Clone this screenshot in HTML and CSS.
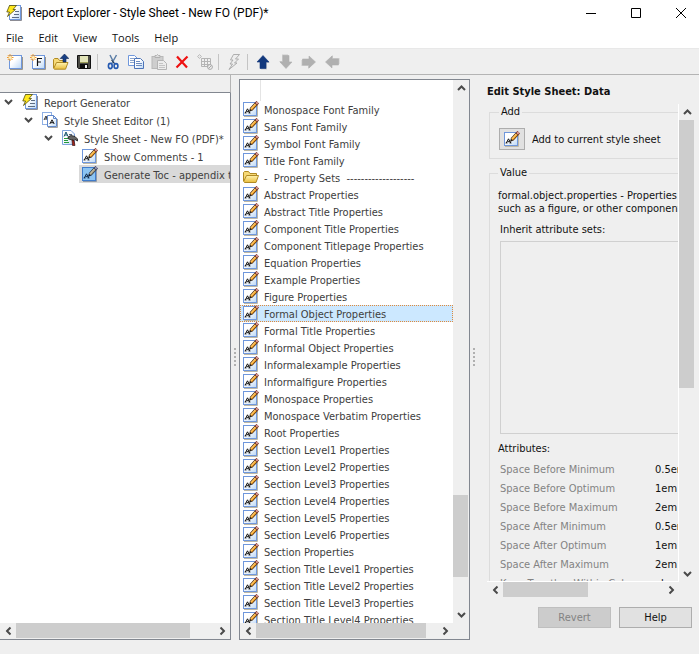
FILE: index.html
```html
<!DOCTYPE html>
<html lang="en">
<head>
    <meta charset="UTF-8">
    <meta name="viewport" content="width=device-width, initial-scale=1.0">
    <title>Report Explorer - Style Sheet - New FO (PDF)*</title>
    <link rel="stylesheet" href="styles.css">
</head>
<body>
    <!-- Shared icons -->
    <svg class="sprite" aria-hidden="true">
        <defs>
            <linearGradient id="page-fill" x1="0" y1="0" x2="1" y2="1">
                <stop offset="0.4" stop-color="#ffffff"/>
                <stop offset="1" stop-color="#bcd8f6"/>
            </linearGradient>
            <linearGradient id="folder-fill" x1="0" y1="0" x2="0" y2="1">
                <stop offset="0" stop-color="#fff3b0"/>
                <stop offset="1" stop-color="#e9bd3c"/>
            </linearGradient>
        </defs>
        <symbol id="icon-style" viewBox="0 0 16 16">
            <path d="M1 15.5H14.5V4" fill="none" stroke="#bdb8a6"/>
            <rect x="0.5" y="1.5" width="13" height="13" fill="url(#page-fill)" stroke="#6f97dc"/>
            <path d="M2.3 12L4.5 7.8L6.7 12M3.5 10.7H5.8" fill="none" stroke="#111"/>
            <path d="M1.5 12H3.5M5.5 12H7.5" stroke="#111" stroke-width="0.8"/>
            <path d="M8 8.5L13.5 2.5" stroke="#4d2c10" stroke-width="3.6"/>
            <path d="M8 8.5L12.8 3.2" stroke="#f8a52a" stroke-width="2.2"/>
            <path d="M8 7.8L12.2 3" stroke="#ffe49a" stroke-width="0.8"/>
            <path d="M13 3L14.8 1.2" stroke="#7a2e2a" stroke-width="3.6"/>
            <path d="M13.2 2.8L14.6 1.4" stroke="#e3a89e" stroke-width="2"/>
            <path d="M6 10.8L6.9 7.6L9.2 9.7Z" fill="#2b2015"/>
        </symbol>
        <symbol id="icon-style-selected" viewBox="0 0 16 16">
            <path d="M1 15.5H14.5V4" fill="none" stroke="#8f9aa8"/>
            <rect x="0.5" y="1.5" width="13" height="13" fill="#8cc4f2" stroke="#3f7ccc"/>
            <path d="M2.3 12L4.5 7.8L6.7 12M3.5 10.7H5.8" fill="none" stroke="#0b2646"/>
            <path d="M1.5 12H3.5M5.5 12H7.5" stroke="#0b2646" stroke-width="0.8"/>
            <path d="M8 8.5L13.5 2.5" stroke="#2c3848" stroke-width="3.6"/>
            <path d="M8 8.5L12.8 3.2" stroke="#a59c80" stroke-width="2.2"/>
            <path d="M8 7.8L12.2 3" stroke="#d8d3b8" stroke-width="0.8"/>
            <path d="M13 3L14.8 1.2" stroke="#3a3f60" stroke-width="3.6"/>
            <path d="M13.2 2.8L14.6 1.4" stroke="#9a9cba" stroke-width="2"/>
            <path d="M6 10.8L6.9 7.6L9.2 9.7Z" fill="#10182a"/>
        </symbol>
        <symbol id="icon-folder" viewBox="0 0 16 16">
            <path d="M0.5 12V3.5L1.5 2.5H5.5L7 4.5H13.5V7" fill="#f6d976" stroke="#b08a24"/>
            <path d="M0.7 12.5L3.5 6.5H15.5L13 13.5H1.5Z" fill="url(#folder-fill)" stroke="#b08a24"/>
        </symbol>
        <symbol id="icon-report" viewBox="0 0 16 16">
            <path d="M4 15.5H15.5V2" fill="none" stroke="#8c8c94"/>
            <rect x="3.5" y="0.5" width="11" height="14" fill="url(#page-fill)" stroke="#6f97dc"/>
            <path d="M9 6.5H13M8 9.5H13M6 12.5H13" stroke="#5c6c84"/>
            <path d="M3.5 0.5H10.5L7 4.5H9.5L1.5 11.5L3.5 7H0.8Z" fill="#ffe81c" stroke="#57510d" stroke-width="0.8"/>
        </symbol>
        <symbol id="icon-editor" viewBox="0 0 16 16">
            <rect x="0.5" y="0.5" width="9" height="12" fill="#fff" stroke="#8fb0e4"/>
            <path d="M2 8L4 4L5.5 8M2.8 7H5" fill="none" stroke="#333"/>
            <path d="M6 15.5H15.5V7" fill="none" stroke="#a4a4a4"/>
            <path d="M5.5 3.5H11.5L14.5 6.5V14.5H5.5Z" fill="url(#page-fill)" stroke="#6088cc"/>
            <path d="M11.5 3.5V6.5H14.5" fill="none" stroke="#6088cc"/>
            <path d="M7.8 12L10 7.8L12.2 12M9 10.7H11.3" fill="none" stroke="#111"/>
        </symbol>
        <symbol id="icon-sheet" viewBox="0 0 16 16">
            <path d="M0.5 0.5H9L12.5 4V14.5H0.5Z" fill="url(#page-fill)" stroke="#7fa3dc"/>
            <path d="M2 6.5L4 2L6 6.5M3 5H5.5" fill="none" stroke="#12506a"/>
            <path d="M7 4.5H10M7 6.5H9" stroke="#56667e"/>
            <path d="M2 8.5H6M2 10.5H6M2 12.5H7" stroke="#259a3c"/>
            <path d="M6 7L9 5.5L13 6.5L15.5 9V11L13 9.5L12 10.5L6.5 9Z" fill="#666" stroke="#1c1c1c" stroke-width="0.8"/>
            <path d="M10 10L12 10.5L13 15.5H10.5Z" fill="#a3261b" stroke="#2a0a08" stroke-width="0.6"/>
        </symbol>
        <symbol id="icon-new" viewBox="0 0 16 16">
            <path d="M3 15.5H15.5V3" fill="none" stroke="#9a968c"/>
            <rect x="2.5" y="1.5" width="12" height="13" fill="url(#page-fill)" stroke="#6f97dc"/>
            <path d="M3 0V7M0 3.5H6.5M0.8 1L5.5 6M5.5 1L0.8 6" stroke="#f39a2c"/>
            <circle cx="3.2" cy="3.5" r="1.5" fill="#fff0b8"/>
        </symbol>
        <symbol id="icon-new-form" viewBox="0 0 16 16">
            <use href="#icon-new"/>
            <path d="M7.5 12V4.5H12M7.5 8H11" fill="none" stroke="#111" stroke-width="1.2"/>
        </symbol>
        <symbol id="icon-open" viewBox="0 0 16 16">
            <path d="M0.5 14V5.5L1.5 4.5H5L6.5 6.5H12.5V9" fill="#f6d976" stroke="#b08a24"/>
            <path d="M0.7 14.5L3.5 8.5H15L12.5 15.2H1.5Z" fill="url(#folder-fill)" stroke="#b08a24"/>
            <path d="M11.5 0L15.8 4.5H13V8H10V4.5H7.2Z" fill="#173f85" stroke="#0c2450" stroke-width="0.6"/>
        </symbol>
        <symbol id="icon-save" viewBox="0 0 16 16">
            <path d="M1.5 1.5H14.5V14.5H2.5L1.5 13.5Z" fill="#4a4a44" stroke="#111"/>
            <rect x="4" y="2" width="8" height="6" fill="#e2e4b8"/>
            <path d="M4 8.5H12" stroke="#9c9d58"/>
            <rect x="4" y="10" width="8" height="4" fill="#0d0d0d"/>
            <rect x="9" y="11" width="2" height="3" fill="#f2f2f2"/>
        </symbol>
        <symbol id="icon-cut" viewBox="0 0 16 16">
            <path d="M5 1L9.5 10M11.5 1L6.5 10" stroke="#5c7ea6" stroke-width="1.5" fill="none"/>
            <path d="M6.5 6L9.5 9.5" stroke="#1c2c44"/>
            <ellipse cx="5.3" cy="12" rx="1.9" ry="2.6" fill="none" stroke="#2358b0" stroke-width="1.6"/>
            <ellipse cx="11" cy="12" rx="1.9" ry="2.4" fill="none" stroke="#2358b0" stroke-width="1.6"/>
        </symbol>
        <symbol id="icon-copy" viewBox="0 0 16 16">
            <path d="M0.5 1.5H6.5L9.5 4.5V11.5H0.5Z" fill="#fff" stroke="#6f97dc"/>
            <path d="M2 4.5H6M2 6.5H6M2 8.5H6" stroke="#8aa4cc"/>
            <path d="M6.5 4.5H12.5L15.5 7.5V14.5H6.5Z" fill="url(#page-fill)" stroke="#4d74b8"/>
            <path d="M8 7.5H12M8 9.5H14M8 11.5H14" stroke="#6d8cc0"/>
        </symbol>
        <symbol id="icon-paste" viewBox="0 0 16 16">
            <rect x="1" y="2.5" width="11" height="12" fill="#cecece" stroke="#b8b8b8"/>
            <path d="M4 3.5V1.5H5.5L6.5 0.5L7.5 1.5H9V3.5Z" fill="#dedede" stroke="#b0b0b0"/>
            <path d="M6.5 6.5H12.5L15.5 9.5V15.5H6.5Z" fill="#ececec" stroke="#b4b4b4"/>
            <path d="M8 9.5H12M8 11.5H14M8 13.5H14" stroke="#c4c4c4"/>
        </symbol>
        <symbol id="icon-delete" viewBox="0 0 16 16">
            <path d="M3 2.5L13 13.5M13.5 2.5L2.5 13.5" stroke="#ee1111" stroke-width="2.2"/>
        </symbol>
        <symbol id="icon-grid" viewBox="0 0 16 16">
            <path d="M4.5 4.5H13.5V12.5H4.5ZM4.5 7.5H13.5M4.5 10.5H13.5M7.5 4.5V12.5M10.5 4.5V12.5" fill="none" stroke="#b4b4b4"/>
            <path d="M2.5 0.5L4.5 2.5L2.5 4.5L0.5 2.5Z" fill="#e6e6e6" stroke="#bcbcbc"/>
            <circle cx="13" cy="13" r="2.4" fill="#efefef" stroke="#a8a8a8"/>
            <path d="M11.5 14.5L14.5 11.5" stroke="#a8a8a8"/>
        </symbol>
        <symbol id="icon-run" viewBox="0 0 16 16">
            <path d="M7.5 0.5H13.5L9.5 5H12.5L8.5 9H11L3 15.5L6.5 10H4L7 6H4.5Z" fill="#ededed" stroke="#a6a6a6" stroke-width="0.9"/>
        </symbol>
        <symbol id="icon-arrow" viewBox="0 0 16 16">
            <path d="M9 3L15 9H12V15.5H6V9Z" fill="#b4b4b4" opacity="0.6"/>
            <path d="M8 1.5L14 8H11V14.5H5V8H2Z" fill="currentColor" stroke="currentColor" stroke-width="0.6"/>
        </symbol>
        <symbol id="chevron" viewBox="0 0 9 6">
            <path d="M1 1L4.5 4.5L8 1" fill="none" stroke="currentColor" stroke-width="2"/>
        </symbol>
    </svg>

    <div class="window">
        <header class="title-bar">
            <svg class="icon"><use href="#icon-report"/></svg>
            <h1 class="window-title">Report Explorer - Style Sheet - New FO (PDF)*</h1>
            <button class="caption-btn" aria-label="Minimize"><svg viewBox="0 0 10 10"><path d="M0 5.5H10"/></svg></button>
            <button class="caption-btn" aria-label="Maximize"><svg viewBox="0 0 10 10"><path d="M0.5 0.5H9.5V9.5H0.5Z"/></svg></button>
            <button class="caption-btn" aria-label="Close"><svg viewBox="0 0 10 10"><path d="M0 0L10 10M10 0L0 10"/></svg></button>
        </header>

        <nav class="menu-bar">
            <button>File</button>
            <button>Edit</button>
            <button>View</button>
            <button>Tools</button>
            <button>Help</button>
        </nav>

        <div class="toolbar">
            <button aria-label="New report"><svg class="icon"><use href="#icon-new"/></svg></button>
            <button aria-label="New form"><svg class="icon"><use href="#icon-new-form"/></svg></button>
            <button aria-label="Open"><svg class="icon"><use href="#icon-open"/></svg></button>
            <button aria-label="Save"><svg class="icon"><use href="#icon-save"/></svg></button>
            <span class="separator"></span>
            <button aria-label="Cut"><svg class="icon"><use href="#icon-cut"/></svg></button>
            <button aria-label="Copy"><svg class="icon"><use href="#icon-copy"/></svg></button>
            <button aria-label="Paste" disabled><svg class="icon"><use href="#icon-paste"/></svg></button>
            <button aria-label="Delete"><svg class="icon"><use href="#icon-delete"/></svg></button>
            <button aria-label="Deactivate" disabled><svg class="icon"><use href="#icon-grid"/></svg></button>
            <span class="separator"></span>
            <button aria-label="Generate" disabled><svg class="icon"><use href="#icon-run"/></svg></button>
            <span class="separator"></span>
            <button class="arrow" aria-label="Move up"><svg class="icon"><use href="#icon-arrow"/></svg></button>
            <button class="arrow down" aria-label="Move down" disabled><svg class="icon"><use href="#icon-arrow"/></svg></button>
            <button class="arrow right" aria-label="Move right" disabled><svg class="icon"><use href="#icon-arrow"/></svg></button>
            <button class="arrow left" aria-label="Move left" disabled><svg class="icon"><use href="#icon-arrow"/></svg></button>
        </div>

        <main class="workspace">
            <!-- Outline -->
            <section class="tree-pane">
                <div class="tree-header"></div>
                <ul class="tree">
                    <li class="tree-row"><svg class="chevron"><use href="#chevron"/></svg><svg class="icon"><use href="#icon-report"/></svg><span>Report Generator</span></li>
                    <li class="tree-row level-1"><svg class="chevron"><use href="#chevron"/></svg><svg class="icon"><use href="#icon-editor"/></svg><span>Style Sheet Editor (1)</span></li>
                    <li class="tree-row level-2"><svg class="chevron"><use href="#chevron"/></svg><svg class="icon"><use href="#icon-sheet"/></svg><span>Style Sheet - New FO (PDF)*</span></li>
                    <li class="tree-row level-3"><svg class="icon"><use href="#icon-style"/></svg><span>Show Comments - 1</span></li>
                    <li class="tree-row level-3 selected"><svg class="icon"><use href="#icon-style-selected"/></svg><span>Generate Toc - appendix toc</span></li>
                </ul>
                <div class="scrollbar horizontal tree-scroll">
                    <button class="left" aria-label="Scroll left"><svg class="chevron"><use href="#chevron"/></svg></button>
                    <div class="track"><div class="thumb"></div></div>
                    <button class="right" aria-label="Scroll right"><svg class="chevron"><use href="#chevron"/></svg></button>
                </div>
            </section>

            <div class="splitter"></div>

            <!-- Style sheet items -->
            <section class="list-pane">
                <ul class="list">
                    <li class="list-gap"></li>
                    <li><svg class="icon"><use href="#icon-style"/></svg>Monospace Font Family</li>
                    <li><svg class="icon"><use href="#icon-style"/></svg>Sans Font Family</li>
                    <li><svg class="icon"><use href="#icon-style"/></svg>Symbol Font Family</li>
                    <li><svg class="icon"><use href="#icon-style"/></svg>Title Font Family</li>
                    <li><svg class="icon"><use href="#icon-folder"/></svg>-&nbsp; Property Sets&nbsp; -------------------</li>
                    <li><svg class="icon"><use href="#icon-style"/></svg>Abstract Properties</li>
                    <li><svg class="icon"><use href="#icon-style"/></svg>Abstract Title Properties</li>
                    <li><svg class="icon"><use href="#icon-style"/></svg>Component Title Properties</li>
                    <li><svg class="icon"><use href="#icon-style"/></svg>Component Titlepage Properties</li>
                    <li><svg class="icon"><use href="#icon-style"/></svg>Equation Properties</li>
                    <li><svg class="icon"><use href="#icon-style"/></svg>Example Properties</li>
                    <li><svg class="icon"><use href="#icon-style"/></svg>Figure Properties</li>
                    <li class="selected"><svg class="icon"><use href="#icon-style"/></svg>Formal Object Properties</li>
                    <li><svg class="icon"><use href="#icon-style"/></svg>Formal Title Properties</li>
                    <li><svg class="icon"><use href="#icon-style"/></svg>Informal Object Properties</li>
                    <li><svg class="icon"><use href="#icon-style"/></svg>Informalexample Properties</li>
                    <li><svg class="icon"><use href="#icon-style"/></svg>Informalfigure Properties</li>
                    <li><svg class="icon"><use href="#icon-style"/></svg>Monospace Properties</li>
                    <li><svg class="icon"><use href="#icon-style"/></svg>Monospace Verbatim Properties</li>
                    <li><svg class="icon"><use href="#icon-style"/></svg>Root Properties</li>
                    <li><svg class="icon"><use href="#icon-style"/></svg>Section Level1 Properties</li>
                    <li><svg class="icon"><use href="#icon-style"/></svg>Section Level2 Properties</li>
                    <li><svg class="icon"><use href="#icon-style"/></svg>Section Level3 Properties</li>
                    <li><svg class="icon"><use href="#icon-style"/></svg>Section Level4 Properties</li>
                    <li><svg class="icon"><use href="#icon-style"/></svg>Section Level5 Properties</li>
                    <li><svg class="icon"><use href="#icon-style"/></svg>Section Level6 Properties</li>
                    <li><svg class="icon"><use href="#icon-style"/></svg>Section Properties</li>
                    <li><svg class="icon"><use href="#icon-style"/></svg>Section Title Level1 Properties</li>
                    <li><svg class="icon"><use href="#icon-style"/></svg>Section Title Level2 Properties</li>
                    <li><svg class="icon"><use href="#icon-style"/></svg>Section Title Level3 Properties</li>
                    <li><svg class="icon"><use href="#icon-style"/></svg>Section Title Level4 Properties</li>
                </ul>
                <div class="scrollbar vertical list-vscroll">
                    <button class="up" aria-label="Scroll up"><svg class="chevron"><use href="#chevron"/></svg></button>
                    <div class="track"><div class="thumb"></div></div>
                    <button class="down" aria-label="Scroll down"><svg class="chevron"><use href="#chevron"/></svg></button>
                </div>
                <div class="scrollbar horizontal list-hscroll">
                    <button class="left" aria-label="Scroll left"><svg class="chevron"><use href="#chevron"/></svg></button>
                    <div class="track"><div class="thumb"></div></div>
                    <button class="right" aria-label="Scroll right"><svg class="chevron"><use href="#chevron"/></svg></button>
                </div>
            </section>

            <div class="splitter"></div>

            <!-- Editor -->
            <section class="edit-pane">
                <h2 class="edit-title">Edit Style Sheet: Data</h2>
                <div class="edit-scroll">
                    <div class="edit-view">
                        <div class="edit-content">
                            <fieldset class="add-group">
                                <legend>Add</legend>
                                <button class="add-btn" id="add"><svg class="icon"><use href="#icon-style"/></svg></button>
                                <label for="add">Add to current style sheet</label>
                            </fieldset>
                            <fieldset class="value-group">
                                <legend>Value</legend>
                                <p class="description">formal.object.properties - Properties associated<br>such as a figure, or other component that has</p>
                                <label class="inherit-label" for="inherit">Inherit attribute sets:</label>
                                <select class="inherit" id="inherit" size="10" disabled></select>
                                <h3 class="attributes-title">Attributes:</h3>
                                <table class="attributes">
                                    <tr><th>Space Before Minimum</th><td>0.5em</td></tr>
                                    <tr><th>Space Before Optimum</th><td>1em</td></tr>
                                    <tr><th>Space Before Maximum</th><td>2em</td></tr>
                                    <tr><th>Space After Minimum</th><td>0.5em</td></tr>
                                    <tr><th>Space After Optimum</th><td>1em</td></tr>
                                    <tr><th>Space After Maximum</th><td>2em</td></tr>
                                    <tr><th>Keep Together Within Column</th><td>always</td></tr>
                                </table>
                            </fieldset>
                        </div>
                    </div>
                    <div class="scrollbar vertical edit-vscroll">
                        <button class="up" aria-label="Scroll up"><svg class="chevron"><use href="#chevron"/></svg></button>
                        <div class="track"><div class="thumb"></div></div>
                        <button class="down" aria-label="Scroll down"><svg class="chevron"><use href="#chevron"/></svg></button>
                    </div>
                    <div class="scrollbar horizontal edit-hscroll">
                        <button class="left" aria-label="Scroll left"><svg class="chevron"><use href="#chevron"/></svg></button>
                        <div class="track"><div class="thumb"></div></div>
                        <button class="right" aria-label="Scroll right"><svg class="chevron"><use href="#chevron"/></svg></button>
                    </div>
                </div>
                <div class="actions">
                    <button disabled>Revert</button>
                    <button>Help</button>
                </div>
            </section>
        </main>
    </div>
</body>
</html>
```
FILE: styles.css
```css
* {
    box-sizing: border-box;
}
body {
    margin: 0;
    background: #efefef;
    color: #111;
    font-family: "DejaVu Sans Condensed", "DejaVu Sans", sans-serif;
    font-size: 11px;
}
button {
    font: inherit;
    color: inherit;
    background: none;
    border: none;
    padding: 0;
}
ul {
    list-style: none;
    margin: 0;
    padding: 0;
}
.sprite {
    position: absolute;
    width: 0;
    height: 0;
}
.icon {
    width: 16px;
    height: 16px;
    flex: none;
}
.chevron {
    width: 9px;
    height: 6px;
    flex: none;
    color: #4a4a4a;
}
.window {
    display: flex;
    flex-direction: column;
    height: 100vh;
}

/* Title and menu */
.title-bar {
    display: flex;
    align-items: center;
    gap: 9px;
    height: 25px;
    padding-left: 6px;
    background: #fff;
}
.window-title {
    flex: 1;
    margin: 0 0 0 -3px;
    font-family: Roboto, "Open Sans", sans-serif;
    font-size: 12px;
    font-weight: normal;
    color: #000;
    white-space: nowrap;
}
.caption-btn {
    width: 36px;
    height: 24px;
    display: flex;
    align-items: center;
    justify-content: center;
}
.caption-btn svg {
    width: 10px;
    height: 10px;
    fill: none;
    stroke: #000;
}
.menu-bar {
    display: flex;
    align-items: center;
    gap: 15px;
    height: 24px;
    padding: 2px 6px 0;
    background: #fff;
    border-bottom: 1px solid #e8e8e8;
    font-family: "Open Sans", "Noto Sans", sans-serif;
}

/* Toolbar */
.toolbar {
    display: flex;
    align-items: center;
    height: 26px;
    padding-left: 3px;
    border-bottom: 1px solid #b4b4b4;
}
.toolbar button {
    width: 23px;
    height: 22px;
    display: flex;
    align-items: center;
    justify-content: center;
}
.separator {
    width: 1px;
    height: 16px;
    margin: 0 3px 0 2px;
    background: #c4c4c4;
}
.arrow {
    color: #12387c;
}
.arrow:disabled {
    color: #b0b0b0;
}
.arrow.down svg {
    transform: rotate(180deg);
}
.arrow.right svg {
    transform: rotate(90deg);
}
.arrow.left svg {
    transform: rotate(-90deg);
}

/* Panes */
.workspace {
    flex: 1;
    min-height: 0;
    display: grid;
    grid-template-columns: minmax(0, 231fr) 8px minmax(0, 231fr) 8px minmax(0, 221fr);
    padding-bottom: 14px;
    color: #404040;
}
.tree-pane {
    display: flex;
    flex-direction: column;
    min-height: 0;
    background: #fff;
    border: 1px solid #828790;
    border-width: 0 1px 1px 0;
}
.tree-header {
    height: 18px;
    margin-right: -1px;
    background: #efefef;
    border-right: 1px solid #b4b4b4;
    border-bottom: 1px solid #828790;
}
.tree {
    flex: 1;
    overflow: hidden;
}
.tree-row {
    display: flex;
    align-items: center;
    height: 18px;
    padding-left: 4px;
    white-space: nowrap;
}
.tree-row .chevron {
    margin-right: 9px;
}
.tree-row span {
    padding: 2px 0 0 6px;
}
.level-1 {
    padding-left: 24px;
}
.level-2 {
    padding-left: 44px;
}
.level-3 {
    margin-left: 79px;
    padding-left: 3px;
}
.tree-row.selected {
    background: #d9d9d9;
}
.splitter {
    align-self: center;
    justify-self: center;
    width: 2px;
    height: 20px;
    background: repeating-linear-gradient(#b0b0b0 0 2px, transparent 2px 4px);
}
.list-pane {
    display: grid;
    grid-template: minmax(0, 1fr) 16px / minmax(0, 1fr) 16px;
    min-height: 0;
    margin-top: 4px;
    border: 1px solid #828790;
    background: #efefef;
}
.list {
    overflow: hidden;
    background: #fff;
}
.list li {
    display: flex;
    align-items: flex-start;
    gap: 5px;
    height: 17px;
    padding-left: 3px;
    line-height: 19px;
    white-space: nowrap;
}
.list .list-gap {
    width: 21px;
    height: 21px;
    border-right: 1px solid #e4e4e4;
}
.list .selected {
    background: #cce8ff;
    outline: 1px dotted #e08a3c;
    outline-offset: -1px;
}

/* Scroll bars */
.scrollbar {
    display: flex;
    background: #efefef;
}
.scrollbar button {
    width: 16px;
    height: 16px;
    flex: none;
    display: flex;
    align-items: center;
    justify-content: center;
}
.scrollbar .track {
    flex: 1;
    display: flex;
}
.scrollbar .thumb {
    background: #cdcdcd;
}
.horizontal .thumb {
    height: 15px;
}
.vertical .thumb {
    width: 15px;
}
.scrollbar .up svg {
    transform: rotate(180deg);
}
.scrollbar .left svg {
    transform: rotate(90deg);
}
.scrollbar .right svg {
    transform: rotate(-90deg);
}
.vertical,
.vertical .track {
    flex-direction: column;
}
.tree-scroll .thumb {
    width: 88%;
}
.list-hscroll .thumb {
    width: 94%;
}
.list-vscroll .track {
    justify-content: flex-end;
    padding-bottom: 30px;
}
.list-vscroll .thumb {
    height: 17%;
}
.edit-hscroll .thumb {
    width: 53%;
}
.edit-vscroll .thumb {
    height: 60%;
}

/* Editor */
.edit-pane {
    display: flex;
    flex-direction: column;
    min-height: 0;
    padding: 10px 4px 0 9px;
    color: #111;
}
.edit-title {
    margin: 0 0 5px;
    font-size: 11px;
    line-height: 14px;
}
.edit-scroll {
    flex: 1;
    min-height: 0;
    display: grid;
    grid-template: minmax(0, 1fr) 16px / minmax(0, 1fr) 16px;
}
.edit-view {
    overflow: hidden;
    border-right: 1px solid #fff;
    border-bottom: 1px solid #fff;
}
.edit-content {
    width: 340px;
    padding: 1px 0 0 2px;
}
fieldset {
    margin: 0 0 7px;
    padding: 0 8px;
    border: 1px solid #dcdcdc;
}
legend {
    padding: 0 2px;
    line-height: 14px;
}
.add-group {
    padding: 9px 9px 8px;
    display: flex;
    align-items: center;
    gap: 7px;
}
.add-btn {
    width: 26px;
    height: 22px;
    display: flex;
    align-items: center;
    justify-content: center;
    background: #e1e1e1;
    border: 1px solid #adadad;
}
.description {
    margin: 9px 0 8px;
    line-height: 13px;
    white-space: nowrap;
}
.inherit-label {
    display: block;
    padding-left: 2px;
    line-height: 13px;
}
.inherit {
    display: block;
    width: 300px;
    height: 193px;
    margin: 5px 2px 8px;
    background: #efefef;
    border: 1px solid #c4c4c4;
    border-radius: 0;
}
.attributes-title {
    margin: 0 0 4px;
    font-size: 11px;
    font-weight: normal;
    line-height: 14px;
}
.attributes {
    border-collapse: collapse;
    white-space: nowrap;
}
.attributes th {
    width: 157px;
    height: 19px;
    padding: 0 0 0 2px;
    font-weight: normal;
    text-align: left;
    color: #838383;
}
.attributes td {
    padding: 0;
}
.actions {
    display: flex;
    justify-content: flex-end;
    gap: 8px;
    padding: 9px 3px 12px 0;
}
.actions button {
    width: 73px;
    height: 21px;
    background: #e1e1e1;
    border: 1px solid #adadad;
}
.actions button:disabled {
    background: #cccccc;
    border-color: #bfbfbf;
    color: #838383;
}
```
